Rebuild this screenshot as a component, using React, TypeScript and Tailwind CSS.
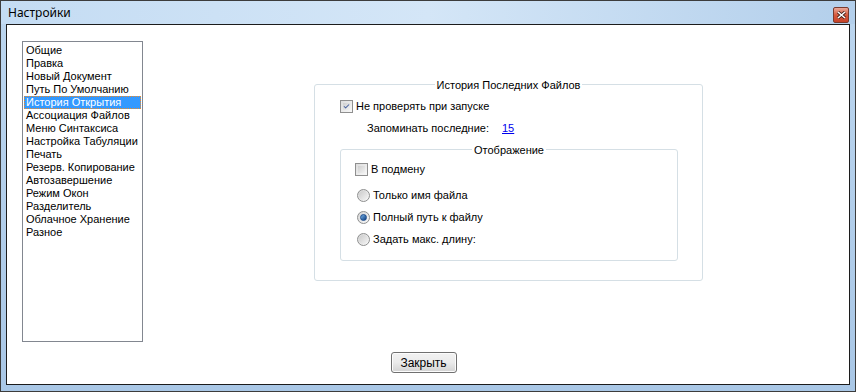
import { Check } from 'lucide-react';

const pages = [
  "Общие",
  "Правка",
  "Новый Документ",
  "Путь По Умолчанию",
  "История Открытия",
  "Ассоциация Файлов",
  "Меню Синтаксиса",
  "Настройка Табуляции",
  "Печать",
  "Резерв. Копирование",
  "Автозавершение",
  "Режим Окон",
  "Разделитель",
  "Облачное Хранение",
  "Разное",
];

const CheckBox = ({ checked }: { checked?: boolean }) => (
  <span className="w-[13px] h-[13px] border border-[#8f8f8f] bg-gradient-to-br from-[#dcdcdc] to-[#f8f8f8] p-[2px] flex items-center justify-center shrink-0">
    <span className="w-full h-full bg-gradient-to-br from-[#cfcfcf] to-[#f2f2f2] flex items-center justify-center">
      {checked && <Check className="w-[11px] h-[11px] text-[#4a64a0]" strokeWidth={3.5} />}
    </span>
  </span>
);

const Radio = ({ checked }: { checked?: boolean }) => (
  <span className="w-[13px] h-[13px] rounded-full border border-[#8e8f8f] bg-gradient-to-br from-[#d6d6d6] to-[#f9f9f9] flex items-center justify-center shrink-0">
    {checked ? (
      <span className="w-[7px] h-[7px] rounded-full bg-gradient-to-br from-[#76b2e6] to-[#0e3e80] border border-[#1a4b8c]" />
    ) : (
      <span className="w-[9px] h-[9px] rounded-full bg-gradient-to-br from-[#cbcbcb] to-[#f4f4f4]" />
    )}
  </span>
);

const GroupBox = ({ title, className, children }: { title: string; className: string; children: React.ReactNode }) => (
  <div className={`relative border border-[#d5dfe5] rounded-[3px] ${className}`}>
    <div className="absolute -top-[7px] left-0 right-0 flex justify-center">
      <span className="bg-white px-[2px] leading-[14px]">{title}</span>
    </div>
    {children}
  </div>
);

export default function App() {
  return (
    <div className="w-[856px] h-[392px] border border-[#3c3c3c] bg-gradient-to-b from-[#bcd6ef] to-[#a9c7e6] flex flex-col text-[11px] text-black" style={{ fontFamily: '"Liberation Sans", Arial, sans-serif' }}>
      {/* Title bar */}
      <div className="h-[23px] flex items-center justify-between pl-[7px] pr-[6px] bg-gradient-to-r from-[#c4dcf3] via-[#d4e6f7] to-[#b3cfeb]">
        <span className="text-[12px] text-black" style={{ fontFamily: '"Noto Sans", sans-serif' }}>Настройки</span>
        <button className="w-[16px] h-[16px] mt-[4px] rounded-[2px] border border-[#7a3b2e] bg-gradient-to-b from-[#e9a99a] via-[#d5583c] to-[#c7432a] flex items-center justify-center">
          <svg width="9" height="8" viewBox="0 0 9 8">
            <path d="M1 1 L8 7 M8 1 L1 7" stroke="#3a1a14" strokeWidth="3" />
            <path d="M1 1 L8 7 M8 1 L1 7" stroke="#ffffff" strokeWidth="1.6" />
          </svg>
        </button>
      </div>

      {/* Client area */}
      <div className="flex-1 mx-[5px] mb-[6px] border border-[#1c1c1c] bg-white flex flex-col">
        <div className="flex-1 flex pt-[16px] pl-[15px]">
          {/* Page list */}
          <div className="w-[121px] h-[301px] border border-[#828790] pt-[2px] px-[1px] flex flex-col">
            {pages.map((p) => (
              <div
                key={p}
                className={
                  p === "История Открытия"
                    ? "h-[13px] leading-[13px] pl-[2px] bg-[#3399ff] text-white outline outline-1 outline-dotted outline-[#f08a24] -outline-offset-1"
                    : "h-[13px] leading-[13px] pl-[2px]"
                }
              >
                {p}
              </div>
            ))}
          </div>

          {/* Settings panel */}
          <div className="flex-1 flex pl-[171px] pt-[43px]">
            <GroupBox title="История Последних Файлов" className="w-[389px] h-[197px] pl-[25px] pt-[15px]">
              <div className="flex items-center gap-[3px] h-[13px]">
                <CheckBox checked />
                <span>Не проверять при запуске</span>
              </div>
              <div className="flex items-center h-[13px] mt-[9px] pl-[27px]">
                <span className="w-[135px]">Запоминать последние:</span>
                <span className="text-[#0000ee] underline">15</span>
              </div>
              <GroupBox title="Отображение" className="w-[338px] h-[112px] mt-[14px] pl-[14px] pt-[13px]">
                <div className="flex items-center gap-[3px] h-[13px]">
                  <CheckBox />
                  <span>В подмену</span>
                </div>
                <div className="flex flex-col gap-[7px] mt-[12px] pl-[2px]">
                  {[
                    { label: "Только имя файла", on: false },
                    { label: "Полный путь к файлу", on: true },
                    { label: "Задать макс. длину:", on: false },
                  ].map((r) => (
                    <div key={r.label} className="flex items-center gap-[3px] h-[15px]">
                      <Radio checked={r.on} />
                      <span>{r.label}</span>
                    </div>
                  ))}
                </div>
              </GroupBox>
            </GroupBox>
          </div>
        </div>

        {/* Footer */}
        <div className="h-[40px] flex justify-center items-start pt-[8px] pr-[9px]">
          <button className="w-[66px] h-[21px] rounded-[3px] border border-[#707070] bg-gradient-to-b from-[#f2f2f2] via-[#ebebeb] to-[#d3d3d3] text-[12px] shadow-[inset_0_0_0_1px_#fcfcfc]">
            Закрыть
          </button>
        </div>
      </div>
    </div>
  );
}
